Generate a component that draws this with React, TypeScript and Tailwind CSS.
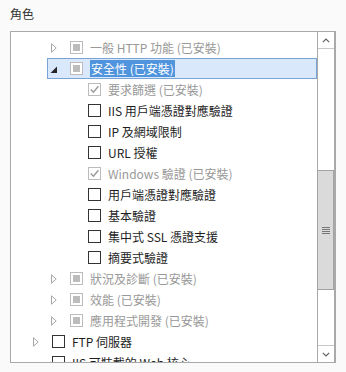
import React from 'react';

type Item = {
  label: string;
  level: number;
  expander?: 'closed' | 'open';
  check: 'none' | 'partial' | 'checked';
  disabled?: boolean;
  selected?: boolean;
};

const items: Item[] = [
  { label: '一般 HTTP 功能 (已安裝)', level: 1, expander: 'closed', check: 'partial', disabled: true },
  { label: '安全性 (已安裝)', level: 1, expander: 'open', check: 'partial', disabled: true, selected: true },
  { label: '要求篩選 (已安裝)', level: 2, check: 'checked', disabled: true },
  { label: 'IIS 用戶端憑證對應驗證', level: 2, check: 'none' },
  { label: 'IP 及網域限制', level: 2, check: 'none' },
  { label: 'URL 授權', level: 2, check: 'none' },
  { label: 'Windows 驗證 (已安裝)', level: 2, check: 'checked', disabled: true },
  { label: '用戶端憑證對應驗證', level: 2, check: 'none' },
  { label: '基本驗證', level: 2, check: 'none' },
  { label: '集中式 SSL 憑證支援', level: 2, check: 'none' },
  { label: '摘要式驗證', level: 2, check: 'none' },
  { label: '狀況及診斷 (已安裝)', level: 1, expander: 'closed', check: 'partial', disabled: true },
  { label: '效能 (已安裝)', level: 1, expander: 'closed', check: 'partial', disabled: true },
  { label: '應用程式開發 (已安裝)', level: 1, expander: 'closed', check: 'partial', disabled: true },
  { label: 'FTP 伺服器', level: 0, expander: 'closed', check: 'none' },
  { label: 'IIS 可裝載的 Web 核心', level: 0, check: 'none' },
];

const indent = ['pl-[18px]', 'pl-[36px]', 'pl-[54px]'];

function Expander({ kind }: { kind?: 'closed' | 'open' }) {
  return (
    <div className="w-[19px] h-full flex items-center shrink-0">
      {kind === 'closed' && (
        <svg width="6" height="10" viewBox="0 0 6 10">
          <path d="M0.5 0.8 L5.2 5 L0.5 9.2 Z" fill="none" stroke="#a6a6a6" strokeWidth="1" />
        </svg>
      )}
      {kind === 'open' && (
        <svg width="8" height="8" viewBox="0 0 8 8" className="-ml-[1px] mt-[3px]">
          <path d="M7 0.5 L7 7 L0.5 7 Z" fill="#262626" />
        </svg>
      )}
    </div>
  );
}

function CheckBox({ check, disabled }: { check: Item['check']; disabled?: boolean }) {
  const border = disabled ? 'border-[#bcbcbc]' : 'border-[#333333]';
  return (
    <div className={`w-[13px] h-[13px] border ${border} bg-white shrink-0 flex items-center justify-center`}>
      {check === 'partial' && <div className="w-[7px] h-[7px] bg-[#bcbcbc]" />}
      {check === 'checked' && (
        <svg width="11" height="11" viewBox="0 0 11 11">
          <path d="M1.8 5.6 L4.4 8.3 L9.4 2.2" fill="none" stroke="#9a9a9a" strokeWidth="1.4" />
        </svg>
      )}
    </div>
  );
}

function Row({ item }: { item: Item }) {
  const box = item.selected
    ? 'bg-[#dae8fb] border border-[#7aa3d6]'
    : 'border border-transparent';
  const text = item.selected
    ? 'bg-[#4f94dd] text-white px-[1px] -ml-[1px]'
    : item.disabled
      ? 'text-[#999999]'
      : 'text-[#1e1e1e]';
  return (
    <div className={`h-[21px] ${indent[item.level]}`}>
      <div className={`h-full flex items-center pl-[3px] ${box}`}>
        <Expander kind={item.expander} />
        <CheckBox check={item.check} disabled={item.disabled} />
        <span className={`ml-[7px] leading-[17px] whitespace-nowrap ${text}`}>{item.label}</span>
      </div>
    </div>
  );
}

function ScrollBar() {
  return (
    <div className="w-[17px] shrink-0 border-l border-[#a9a9a9] flex flex-col bg-white">
      <div className="h-[17px] border-b border-[#c8c8c8] flex items-center justify-center">
        <svg width="8" height="5" viewBox="0 0 8 5">
          <path d="M0.8 4.2 L4 1 L7.2 4.2" fill="none" stroke="#606060" strokeWidth="1.2" />
        </svg>
      </div>
      <div className="flex-1 flex flex-col pt-[121px]">
        <div className="h-[120px] -ml-[1px] bg-[#dadada] border border-[#a3a3a3] flex items-center justify-center">
          <div className="flex flex-col gap-[1px]">
            <div className="w-[8px] h-[1px] bg-[#777777]" />
            <div className="w-[8px] h-[1px] bg-[#777777]" />
            <div className="w-[8px] h-[1px] bg-[#777777]" />
            <div className="w-[8px] h-[1px] bg-[#777777]" />
          </div>
        </div>
      </div>
      <div className="h-[17px] border-t border-[#c8c8c8] flex items-center justify-center">
        <svg width="8" height="5" viewBox="0 0 8 5">
          <path d="M0.8 0.8 L4 4 L7.2 0.8" fill="none" stroke="#606060" strokeWidth="1.2" />
        </svg>
      </div>
    </div>
  );
}

export default function App() {
  return (
    <div
      className="w-[346px] h-[372px] bg-[#fafafa] text-[12px]"
      style={{ fontFamily: '"Noto Sans CJK TC", "Noto Sans", sans-serif' }}
    >
      <div className="pl-[10px] pt-[6px] h-[31px] text-[12px] leading-[16px] text-[#333333]">角色</div>
      <div className="ml-[10px] w-[326px] h-[332px] border border-[#a9a9a9] border-r-2 bg-white flex">
        <div className="flex-1 overflow-hidden pt-[5px]">
          {items.map((item) => (
            <Row key={item.label} item={item} />
          ))}
        </div>
        <ScrollBar />
      </div>
    </div>
  );
}
